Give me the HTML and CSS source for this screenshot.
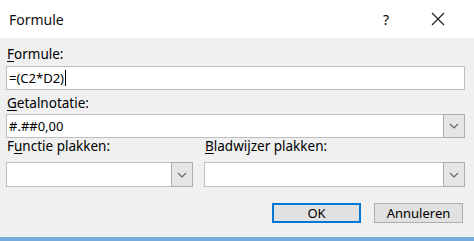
FILE: index.html
```html
<!DOCTYPE html>
<html>
<head>
<meta charset="utf-8">
<link rel="stylesheet" href="styles.css">
</head>
<body>
<div class="dialog">
  <div class="titlebar">
    <span class="title">Formule</span>
    <span class="help">?</span>
    <span class="close"><svg width="14" height="14" viewBox="0 0 14 14"><path d="M1 1L13 13M13 1L1 13" stroke="#222" stroke-width="1.2" fill="none"/></svg></span>
  </div>
  <div class="content">
    <div class="label l1"><u>F</u>ormule:</div>
    <div class="field input">=(C2*D2)<span class="caret"></span></div>
    <div class="label l2"><u>G</u>etalnotatie:</div>
    <div class="field combo"><span class="val">#.##0,00</span><span class="drop"><svg width="10" height="6" viewBox="0 0 10 6"><path d="M1 1L5 5L9 1" stroke="#666" stroke-width="1.2" fill="none"/></svg></span></div>
    <div class="row">
      <div class="col left">
        <div class="label l3">F<u>u</u>nctie plakken:</div>
        <div class="field combo tall"><span class="val"></span><span class="drop"><svg width="10" height="6" viewBox="0 0 10 6"><path d="M1 1L5 5L9 1" stroke="#666" stroke-width="1.2" fill="none"/></svg></span></div>
      </div>
      <div class="col right">
        <div class="label l3"><u>B</u>ladwijzer plakken:</div>
        <div class="field combo tall"><span class="val"></span><span class="drop"><svg width="10" height="6" viewBox="0 0 10 6"><path d="M1 1L5 5L9 1" stroke="#666" stroke-width="1.2" fill="none"/></svg></span></div>
      </div>
    </div>
    <div class="buttons">
      <div class="btn ok">OK</div>
      <div class="btn">Annuleren</div>
    </div>
  </div>
  <div class="bottombar"></div>
</div>
</body>
</html>
```

FILE: styles.css
```css
html, body {
  margin: 0;
  padding: 0;
  background: #f0f0f0;
}
.dialog {
  width: 474px;
  height: 241px;
  display: flex;
  flex-direction: column;
  background: #f0f0f0;
  font-family: "Noto Sans", "Open Sans", sans-serif;
  font-size: 13px;
  color: #000;
  overflow: hidden;
}
.titlebar {
  height: 38px;
  background: #fff;
  display: flex;
  align-items: center;
  padding-left: 9px;
  box-sizing: border-box;
}
.title {
  font-size: 14px;
  color: #111;
  flex: 1;
}
.help {
  font-size: 14px;
  width: 14px;
  margin-right: 38px;
  text-align: center;
}
.close {
  display: flex;
  margin-right: 29px;
}
.content {
  flex: 1;
  display: flex;
  flex-direction: column;
  padding: 0 9px 0 6px;
}
.label {
  line-height: 16px;
  height: 16px;
  padding-left: 1px;
  font-size: 13.5px;
}
.label u {
  text-decoration-thickness: 1px;
  text-underline-offset: 2px;
}
.l1 { margin-top: 8px; margin-bottom: 4px; }
.l2 { margin-top: 5px; margin-bottom: 3px; }
.l3 { margin-top: 0; margin-bottom: 8px; }
.field {
  box-sizing: border-box;
  height: 24px;
  background: #fff;
  border: 1px solid #bdbdbd;
  display: flex;
  align-items: center;
}
.input {
  padding-left: 2px;
}
.caret {
  display: inline-block;
  width: 1px;
  height: 16px;
  background: #000;
  margin-left: 1px;
}
.combo .val {
  flex: 1;
  padding-left: 2px;
}
.drop {
  box-sizing: border-box;
  width: 22px;
  align-self: stretch;
  margin: -1px -1px -1px 0;
  background: #e5e5e5;
  border: 1px solid #acacac;
  display: flex;
  align-items: center;
  justify-content: center;
}
.tall {
  height: 25px;
}
.row {
  display: flex;
  margin-top: 0;
}
.left {
  width: 187px;
}
.right {
  margin-left: 11px;
  flex: 1;
}
.buttons {
  display: flex;
  justify-content: flex-end;
  gap: 13px;
  margin-top: 16px;
  padding-right: 2px;
}
.btn {
  box-sizing: border-box;
  width: 89px;
  height: 20px;
  background: #e1e1e1;
  border: 1px solid #adadad;
  display: flex;
  align-items: center;
  justify-content: center;
  font-size: 13px;
}
.btn.ok {
  border: 2px solid #0078d7;
}
.bottombar {
  height: 4px;
  background: #78acdd;
}
```
